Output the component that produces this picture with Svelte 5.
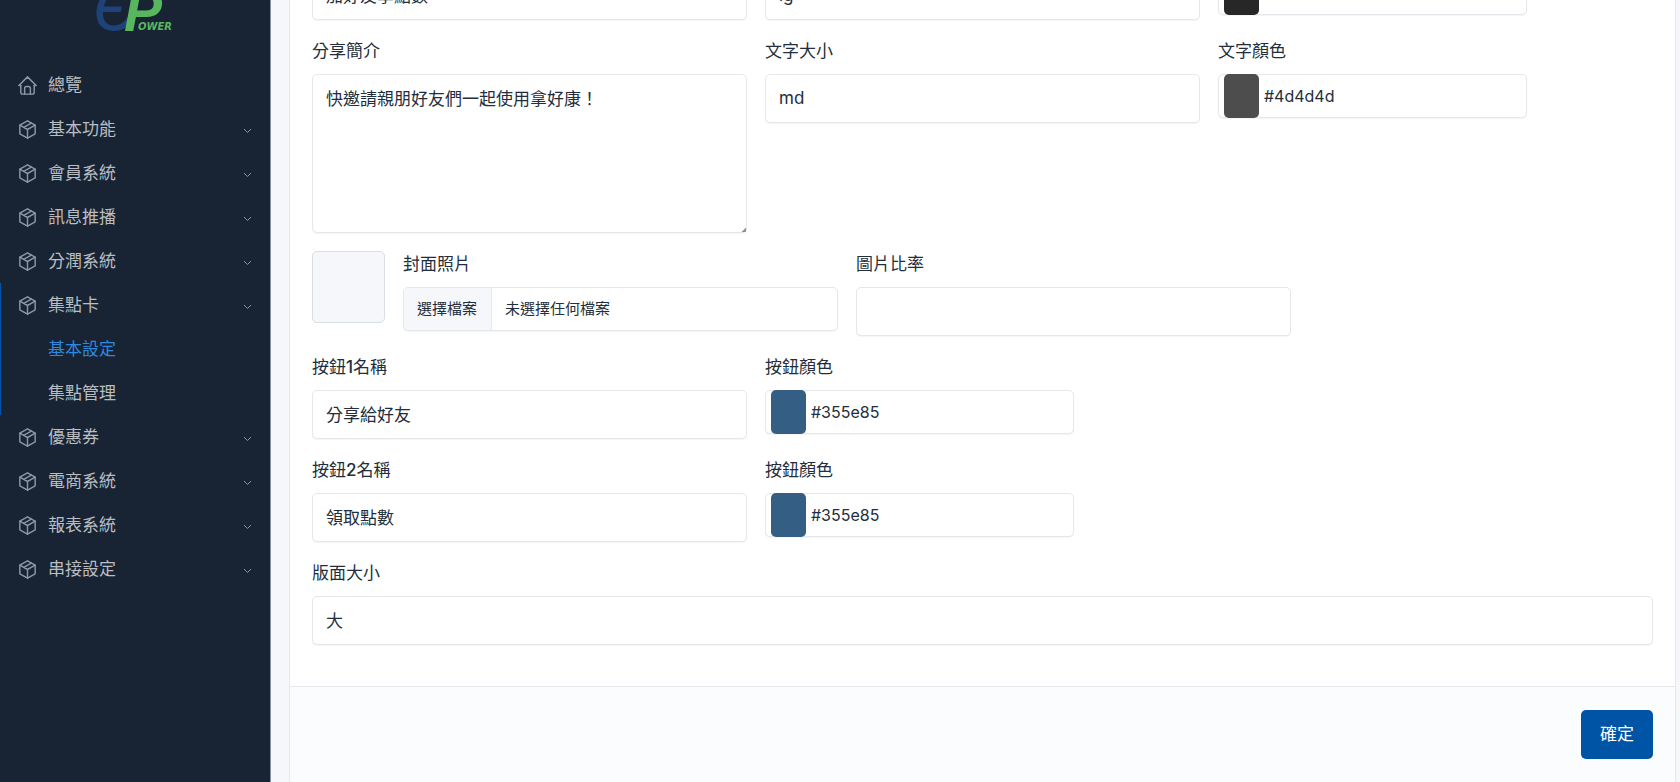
<script>
	const menu = [
		{ name: "總覽", icon: "home" },
		{ name: "基本功能", children: [] },
		{ name: "會員系統", children: [] },
		{ name: "訊息推播", children: [] },
		{ name: "分潤系統", children: [] },
		{ name: "集點卡", open: true, children: ["基本設定", "集點管理"] },
		{ name: "優惠券", children: [] },
		{ name: "電商系統", children: [] },
		{ name: "報表系統", children: [] },
		{ name: "串接設定", children: [] },
	];

	let current = "基本設定";

	let title = "加好友享點數";
	let titleSize = "lg";
	let titleColor = "#272727";
	let intro = "快邀請親朋好友們一起使用拿好康！";
	let introSize = "md";
	let introColor = "#4d4d4d";
	let ratio = "";
	let buttons = [
		{ no: 1, text: "分享給好友", color: "#355e85" },
		{ no: 2, text: "領取點數", color: "#355e85" },
	];
	let layoutSize = "大";

	let files;
	$: fileName = files && files.length ? files[0].name : "未選擇任何檔案";
</script>

<div class="page">
	<aside>
		<a class="logo" href="#top" aria-label="EPower">
			<svg width="84" height="44" viewBox="0 0 84 44">
				<text class="logo_e" x="1" y="42">Є</text>
				<text class="logo_p" x="31" y="43">P</text>
				<text class="logo_ower" x="45" y="42">OWER</text>
			</svg>
		</a>
		<nav>
			{#each menu as item}
				<div class="group" class:open={item.open}>
					<a class="item" href="#menu">
						<svg class="icon" viewBox="0 0 24 24">
							{#if item.icon === "home"}
								<path d="M5 12H3l9-9 9 9h-2" />
								<path d="M5 12v7a2 2 0 0 0 2 2h10a2 2 0 0 0 2-2v-7" />
								<path d="M9 21v-6a2 2 0 0 1 2-2h2a2 2 0 0 1 2 2v6" />
							{:else}
								<path d="M12 3l8 4.500v9L12 21l-8-4.500v-9L12 3" />
								<path d="M12 12l8-4.500M12 12v9M12 12L4 7.500M16 5.250l-8 4.500" />
							{/if}
						</svg>
						<span>{item.name}</span>
						{#if item.children}
							<svg class="arrow" viewBox="0 0 9 6"><path d="M1 1l3.500 3.500L8 1" /></svg>
						{/if}
					</a>
					{#if item.open}
						{#each item.children as child}
							<a class="item sub" class:active={child === current} href="#sub">{child}</a>
						{/each}
					{/if}
				</div>
			{/each}
		</nav>
	</aside>

	<main>
		<form class="card" on:submit|preventDefault>
			<div class="card_body">
				<div class="row">
					<div class="field">
						<input class="control" type="text" aria-label="分享標題" bind:value={title} />
					</div>
					<div class="field">
						<input class="control" type="text" aria-label="標題大小" bind:value={titleSize} />
					</div>
					<div class="field">
						<div class="color">
							<input type="color" aria-label="標題顏色" bind:value={titleColor} />
							<span>{titleColor}</span>
						</div>
					</div>
				</div>

				<div class="row">
					<div class="field">
						<label for="intro">分享簡介</label>
						<textarea class="control" id="intro" bind:value={intro}></textarea>
					</div>
					<div class="field">
						<label for="intro_size">文字大小</label>
						<input class="control" id="intro_size" type="text" bind:value={introSize} />
					</div>
					<div class="field">
						<label for="intro_color">文字顏色</label>
						<div class="color">
							<input id="intro_color" type="color" bind:value={introColor} />
							<span>{introColor}</span>
						</div>
					</div>
				</div>

				<div class="row">
					<div class="thumb"></div>
					<div class="field">
						<label for="cover">封面照片</label>
						<div class="file">
							<span class="file_button">選擇檔案</span>
							<span class="file_name">{fileName}</span>
							<input id="cover" type="file" bind:files />
						</div>
					</div>
					<div class="field">
						<label for="ratio">圖片比率</label>
						<input class="control" id="ratio" type="text" bind:value={ratio} />
					</div>
				</div>

				{#each buttons as button}
					<div class="row">
						<div class="field">
							<label for="button_{button.no}">按鈕<b>{button.no}</b>名稱</label>
							<input class="control" id="button_{button.no}" type="text" bind:value={button.text} />
						</div>
						<div class="field">
							<label for="button_color_{button.no}">按鈕顏色</label>
							<div class="color">
								<input id="button_color_{button.no}" type="color" bind:value={button.color} />
								<span>{button.color}</span>
							</div>
						</div>
					</div>
				{/each}

				<div class="row">
					<div class="field full">
						<label for="layout_size">版面大小</label>
						<input class="control" id="layout_size" type="text" bind:value={layoutSize} />
					</div>
				</div>
			</div>
			<div class="card_footer">
				<button type="submit">確定</button>
			</div>
		</form>
	</main>
</div>

<style>
	:global(body) {
		margin: 0;
		background: #f5f7fb;
	}

	.page {
		display: flex;
		height: 100vh;
		overflow: hidden;
		font-family: Inter, "Noto Sans CJK TC", sans-serif;
		font-size: 17px;
		line-height: 25px;
		color: #232e3c;
	}

	.page * {
		box-sizing: border-box;
	}

	/* sidebar */
	aside {
		flex: none;
		width: 271px;
		background: #182433;
		border-right: 1px solid #8b93a3;
	}

	.logo {
		display: flex;
		justify-content: center;
		margin-top: -12px;
		margin-bottom: 31px;
	}

	.logo_e {
		font: italic 59px "Liberation Sans", sans-serif;
		fill: #1f4379;
		stroke: #1f4379;
	}

	.logo_p {
		font: italic bold 57px "Liberation Sans", sans-serif;
		fill: #58b75e;
	}

	.logo_ower {
		font: italic bold 10px "DejaVu Sans", sans-serif;
		fill: #58b75e;
	}

	.group.open {
		box-shadow: inset 1px 0 #0054a6;
	}

	.item {
		display: flex;
		align-items: center;
		height: 44px;
		padding: 0 18px 0 16px;
		color: #babdc2;
		text-decoration: none;
	}

	.item.sub {
		padding-left: 48px;
	}

	.item.active {
		color: #2f88e0;
	}

	.icon {
		width: 23px;
		height: 23px;
		margin-right: 9px;
		fill: none;
		stroke: #8d96a5;
		stroke-width: 1.500;
		stroke-linecap: round;
		stroke-linejoin: round;
	}

	.arrow {
		width: 9px;
		height: 6px;
		margin-left: auto;
		margin-top: 3px;
		fill: none;
		stroke: #8d949f;
	}

	/* form */
	main {
		flex: 1;
		display: flex;
		min-width: 0;
		padding: 0 4px 0 18px;
	}

	.card {
		flex: 1;
		display: flex;
		flex-direction: column;
		min-width: 0;
		margin-top: -29px;
		background: #fff;
		border: 1px solid #e6e8ed;
		border-width: 0 1px;
	}

	.card_body {
		display: flex;
		flex-direction: column;
		gap: 18px;
		padding: 0 22px 41px;
	}

	.row {
		display: flex;
		align-items: flex-start;
		gap: 18px;
	}

	.field {
		flex: none;
		width: calc((100% - 36px) / 3);
	}

	.field.full {
		width: 100%;
	}

	label {
		display: block;
		padding-top: 1px;
		margin-bottom: 10px;
	}

	label b {
		font-weight: 500;
	}

	.control,
	.color,
	.file {
		background: #fff;
		border: 1px solid #e4e7eb;
		border-radius: 5px;
		box-shadow: 0 1px 1px rgba(35, 46, 60, 0.05);
	}

	.control {
		display: block;
		width: 100%;
		height: 49px;
		padding: 10px 13px 12px;
		font: inherit;
		color: inherit;
	}

	textarea.control {
		height: 159px;
		padding-top: 12px;
	}

	textarea::-webkit-resizer {
		background: linear-gradient(135deg, transparent 85%, #8d949f 85%);
	}

	.color {
		display: flex;
		align-items: center;
		gap: 5px;
		width: 71%;
		height: 44px;
		padding-left: 5px;
		font-size: 16px;
	}

	.color input {
		width: 35px;
		height: 44px;
		padding: 0;
		border: 0;
		background: none;
	}

	.color input::-webkit-color-swatch-wrapper {
		padding: 0;
	}

	.color input::-webkit-color-swatch {
		border: 0;
		border-radius: 5px;
	}

	.thumb {
		flex: none;
		width: 73px;
		height: 72px;
		background: #f5f7fb;
		border: 1px solid #d9dde4;
		border-radius: 5px;
	}

	.file {
		position: relative;
		display: flex;
		height: 44px;
		overflow: hidden;
		font-size: 15px;
		line-height: 41px;
	}

	.file_button {
		padding: 0 14px 0 13px;
		background: #f5f7fb;
		border-right: 1px solid #e6e8ed;
	}

	.file_name {
		padding-left: 13px;
	}

	.file input {
		position: absolute;
		inset: 0;
		opacity: 0;
	}

	.card_footer {
		flex: 1;
		display: flex;
		align-items: flex-start;
		justify-content: flex-end;
		padding: 23px 22px;
		background: #fbfcfe;
		border-top: 1px solid #e6e8ed;
	}

	button {
		width: 72px;
		height: 49px;
		padding: 0;
		font: inherit;
		color: #fff;
		background: #0054a6;
		border: 0;
		border-radius: 5px;
	}
</style>
